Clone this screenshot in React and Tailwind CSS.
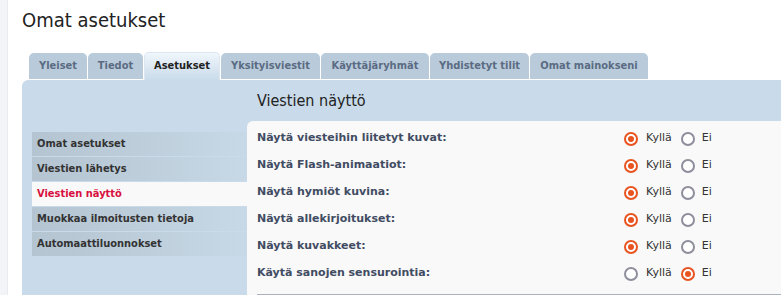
import React from "react";

const tabs = [
    { label: "Yleiset", w: "w-[58px]" },
    { label: "Tiedot", w: "w-[55px]" },
    { label: "Asetukset", w: "w-[76px]", active: true },
    { label: "Yksityisviestit", w: "w-[99px]" },
    { label: "Käyttäjäryhmät", w: "w-[108px]" },
    { label: "Yhdistetyt tilit", w: "w-[99px]" },
    { label: "Omat mainokseni", w: "w-[118px]" },
];

const menu = [
    { label: "Omat asetukset" },
    { label: "Viestien lähetys" },
    { label: "Viestien näyttö", active: true },
    { label: "Muokkaa ilmoitusten tietoja" },
    { label: "Automaattiluonnokset" },
];

const rows = [
    { label: "Näytä viesteihin liitetyt kuvat:", yes: true },
    { label: "Näytä Flash-animaatiot:", yes: true },
    { label: "Näytä hymiöt kuvina:", yes: true },
    { label: "Näytä allekirjoitukset:", yes: true },
    { label: "Näytä kuvakkeet:", yes: true },
    { label: "Käytä sanojen sensurointia:", yes: false },
];

function Radio({ checked }) {
    if (checked) {
        return (
            <span className="w-[14px] h-[14px] rounded-full border-2 border-[#e8531f] bg-white flex items-center justify-center shrink-0">
                <span className="w-[6px] h-[6px] rounded-full bg-[#e8531f]" />
            </span>
        );
    }
    return <span className="block w-[14px] h-[14px] rounded-full border-2 border-[#8e8e9c] bg-white shrink-0" />;
}

export default function App() {
    return (
        <div className="flex w-[781px] h-[295px] overflow-hidden bg-white font-['DejaVu_Sans',sans-serif]">
            <div className="w-[8px] shrink-0 bg-[#f3f4f8] border-r border-[#e9ebf1]" />

            <div className="flex-1 pl-[14px] pt-[8px]">
                <h1 className="text-[20px] leading-[24px] text-[#222] font-['DejaVu_Sans_Condensed',sans-serif]">
                    Omat asetukset
                </h1>

                {/* Tabs */}
                <div className="flex items-end gap-[1px] ml-[7px] mt-[20px] h-[28px] font-['DejaVu_Sans_Condensed',sans-serif]">
                    {tabs.map((t) =>
                        t.active ? (
                            <div
                                key={t.label}
                                className={`${t.w} h-[28px] rounded-t-[5px] border border-b-0 border-[#dbe6f0] bg-gradient-to-b from-[#f0f6fc] to-[#c9dbea] text-[11px] font-bold text-[#222] flex items-center justify-center pb-[1px]`}
                            >
                                {t.label}
                            </div>
                        ) : (
                            <div
                                key={t.label}
                                className={`${t.w} h-[26px] mb-[1px] rounded-t-[5px] bg-[#b9cbdb] text-[11px] font-bold text-[#5b6b83] flex items-center justify-center`}
                            >
                                {t.label}
                            </div>
                        )
                    )}
                </div>

                {/* Panel */}
                <div className="bg-[#c9dbea] rounded-tl-[6px] pl-[10px] flex h-[220px]">
                    <div className="w-[215px] shrink-0 pt-[52px] font-['DejaVu_Sans_Condensed',sans-serif]">
                        {menu.map((m) =>
                            m.active ? (
                                <div
                                    key={m.label}
                                    className="h-[24px] mb-[1px] bg-[#f9f9f9] pl-[5px] flex items-center text-[11px] font-bold text-[#d8103f]"
                                >
                                    {m.label}
                                </div>
                            ) : (
                                <div
                                    key={m.label}
                                    className="h-[24px] mb-[1px] bg-gradient-to-r from-[#b4c4d1] to-[#c7d8e6] pl-[5px] flex items-center text-[11px] font-bold text-[#333]"
                                >
                                    {m.label}
                                </div>
                            )
                        )}
                    </div>

                    <div className="flex-1 flex flex-col">
                        <div className="h-[41px] pl-[10px] flex items-center text-[16px] text-[#222] font-['DejaVu_Sans_Condensed',sans-serif]">
                            Viestien näyttö
                        </div>
                        <div className="flex-1 bg-[#f9f9f9] rounded-tl-[6px] pl-[10px] pt-[4px]">
                            {rows.map((r) => (
                                <div key={r.label} className="h-[27px] flex items-center">
                                    <div className="w-[367px] text-[11px] font-bold text-[#414c63]">{r.label}</div>
                                    <div className="flex items-center text-[11px] text-[#333]">
                                        <Radio checked={r.yes} />
                                        <span className="ml-[8px]">Kyllä</span>
                                        <span className="ml-[9px] flex">
                                            <Radio checked={!r.yes} />
                                        </span>
                                        <span className="ml-[7px]">Ei</span>
                                    </div>
                                </div>
                            ))}
                            <div className="mt-[7px] border-t-2 border-[#a8b3bf]" />
                        </div>
                    </div>
                </div>
            </div>
        </div>
    );
}
